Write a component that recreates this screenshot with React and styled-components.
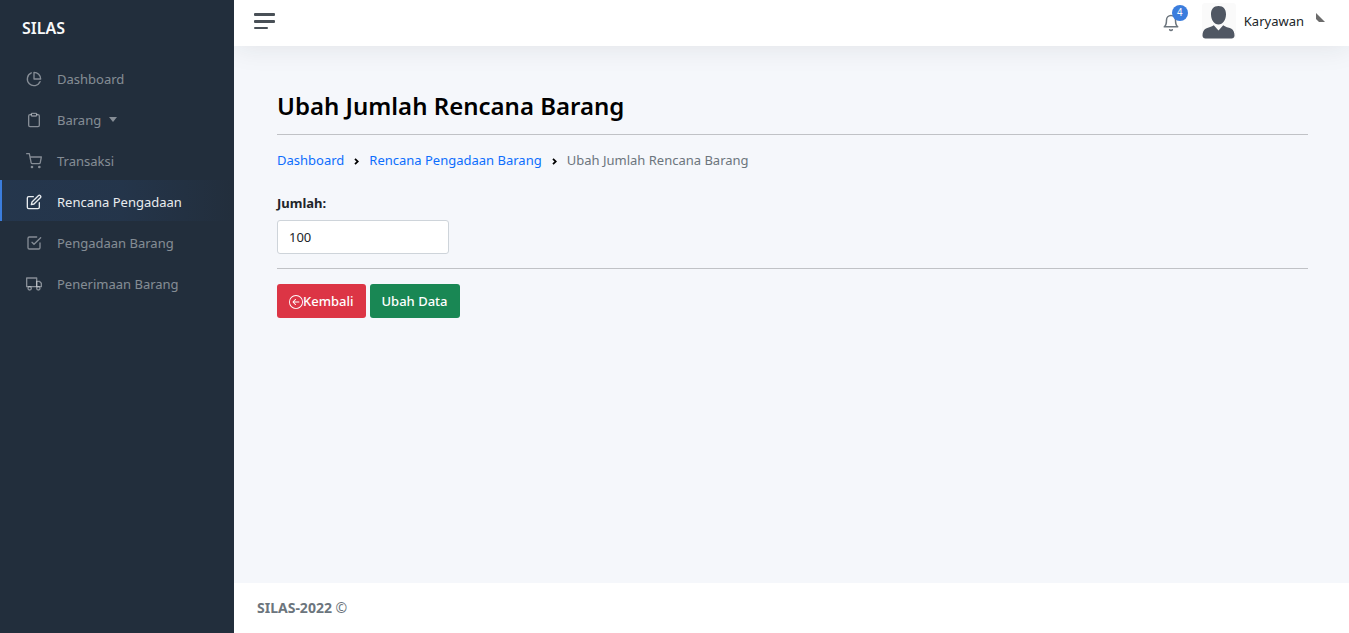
import React from 'react';
import styled, { createGlobalStyle } from 'styled-components';
import {
  FiPieChart, FiClipboard, FiShoppingCart, FiEdit, FiCheckSquare, FiTruck, FiBell,
} from 'react-icons/fi';
import { BsArrowLeftCircle } from 'react-icons/bs';

const GlobalStyle = createGlobalStyle`
  *, *::before, *::after { box-sizing: border-box; }
  body {
    margin: 0;
    background: #f5f7fb;
    color: #212529;
    font-family: 'Noto Sans', 'Open Sans', sans-serif;
    font-size: 13px;
    line-height: 20px;
  }
  a { text-decoration: none; }
`;

const Layout = styled.div`
  display: flex;
  min-height: 100vh;
`;

const Sidebar = styled.nav`
  position: relative;
  z-index: 1;
  flex: 0 0 234px;
  background: #222e3c;
`;

const Brand = styled.a`
  display: block;
  padding: 16px 22px 17px;
  color: #f8f9fa;
  font-size: 16px;
  font-weight: 600;
  line-height: 24px;
`;

const NavList = styled.ul`
  margin: 0;
  padding: 0;
  list-style: none;
`;

const NavLink = styled.a`
  display: flex;
  align-items: center;
  gap: 15px;
  height: 41px;
  padding: 2px 0 0 24px;
  border-left: 2px solid ${(p) => (p.$active ? '#3b7ddd' : 'transparent')};
  background: ${(p) => (p.$active
    ? 'linear-gradient(90deg, rgba(59, 125, 221, 0.1), rgba(59, 125, 221, 0.09) 50%, transparent)'
    : 'transparent')};
  color: ${(p) => (p.$active ? '#e9ecef' : 'rgba(233, 236, 239, 0.5)')};

  svg {
    width: 16px;
    height: 16px;
    stroke-width: 2;
  }
`;

const NavLabel = styled.span`
  display: flex;
  align-items: center;
  gap: 8px;
`;

const Caret = styled.span`
  border: 4px solid transparent;
  border-top: 5px solid currentColor;
  border-bottom: 0;
`;

const Main = styled.div`
  display: flex;
  flex: 1;
  flex-direction: column;
  min-width: 0;
`;

const Topbar = styled.header`
  display: flex;
  align-items: center;
  justify-content: space-between;
  height: 46px;
  padding: 0 24px 0 20px;
  background: #fff;
  box-shadow: 0 0 29px rgba(33, 37, 41, 0.1);
`;

const MenuButton = styled.button`
  display: grid;
  gap: 4px;
  margin: 0 0 4px;
  padding: 0;
  border: 0;
  background: none;
  cursor: pointer;
`;

const MenuBar = styled.span`
  width: ${(p) => (p.$short ? '14px' : '21px')};
  height: ${(p) => (p.$short ? '2px' : '3px')};
  border-radius: 1px;
  background: #495057;
`;

const UserArea = styled.div`
  display: flex;
  align-items: center;
`;

const BellButton = styled.button`
  position: relative;
  display: flex;
  margin: 0 22px 0 0;
  padding: 0;
  border: 0;
  background: none;
  color: #6c757d;
  cursor: pointer;

  svg {
    width: 18px;
    height: 18px;
    stroke-width: 2;
  }
`;

const Badge = styled.span`
  position: absolute;
  top: -9px;
  right: -8px;
  width: 16px;
  height: 16px;
  border-radius: 50%;
  background: #3b7ddd;
  color: #fff;
  font-size: 10px;
  line-height: 16px;
  text-align: center;
`;

const UserLink = styled.a`
  display: flex;
  align-items: center;
  gap: 8px;
  margin-bottom: 4px;
  color: #212529;
`;

const Avatar = styled.svg`
  width: 34px;
  height: 36px;
  border-radius: 3px;
  background: #fafafa;
`;

const Corner = styled.svg`
  width: 9px;
  height: 9px;
  margin: 0 0 8px 4px;
`;

const Content = styled.main`
  flex: 1;
  padding: 44px 41px 44px 43px;
`;

const Title = styled.h1`
  margin: 0;
  color: #000;
  font-size: 24px;
  font-weight: 600;
  line-height: 32px;
`;

const Rule = styled.hr`
  height: 1px;
  margin: ${(p) => p.$gap || '14px'} 0 15px;
  border: 0;
  background: #c0c2c6;
`;

const Crumbs = styled.ol`
  display: flex;
  align-items: center;
  margin: 0 0 23px;
  padding: 0;
  list-style: none;
  color: #6c757d;

  li {
    display: flex;
    align-items: center;
  }
  a { color: #0d6efd; }
  svg { margin: 2px 10px 0; }
`;

const Label = styled.label`
  display: block;
  margin-bottom: 7px;
  font-weight: 700;
`;

const Input = styled.input`
  display: block;
  width: 172px;
  height: 34px;
  padding: 0 11px;
  border: 1px solid #ced4da;
  border-radius: 3px;
  background: #fff;
  color: #212529;
  font: inherit;
`;

const Actions = styled.div`
  display: flex;
  gap: 4px;
`;

const Button = styled.button`
  display: flex;
  align-items: center;
  height: 34px;
  padding: 0 12px;
  border: 0;
  border-radius: 3px;
  background: ${(p) => (p.$danger ? '#dc3545' : '#198754')};
  color: #fff;
  font: inherit;
  font-weight: 500;
  cursor: pointer;

  svg {
    width: 14px;
    height: 14px;
    margin-top: 2px;
  }
`;

const Footer = styled.footer`
  padding: 15px 23px;
  background: #fff;
  color: #6c757d;
  font-size: 14px;
`;

const items = [
  { label: 'Dashboard', Icon: FiPieChart },
  { label: 'Barang', Icon: FiClipboard, menu: true },
  { label: 'Transaksi', Icon: FiShoppingCart },
  { label: 'Rencana Pengadaan', Icon: FiEdit, active: true },
  { label: 'Pengadaan Barang', Icon: FiCheckSquare },
  { label: 'Penerimaan Barang', Icon: FiTruck },
];

function Chevron() {
  return (
    <svg width="5" height="7" viewBox="0 0 5 7" fill="none" stroke="#000" strokeWidth="1.8" aria-hidden="true">
      <path d="M1 .8 3.8 3.500 1 6.2" />
    </svg>
  );
}

export default function App() {
  return (
    <>
      <GlobalStyle />
      <Layout>
        <Sidebar>
          <Brand href="#">SILAS</Brand>
          <NavList>
            {items.map(({ label, Icon, active, menu }) => (
              <li key={label}>
                <NavLink href="#" $active={active} aria-current={active ? 'page' : undefined}>
                  <Icon />
                  <NavLabel>
                    {label}
                    {menu && <Caret />}
                  </NavLabel>
                </NavLink>
              </li>
            ))}
          </NavList>
        </Sidebar>
        <Main>
          <Topbar>
            <MenuButton type="button" aria-label="Menu">
              <MenuBar />
              <MenuBar />
              <MenuBar $short />
            </MenuButton>
            <UserArea>
              <BellButton type="button">
                <FiBell />
                <Badge>4</Badge>
              </BellButton>
              <UserLink href="#">
                <Avatar viewBox="0 0 34 36" aria-hidden="true">
                  <path
                    fill="#505763"
                    d="M16.500 3c5 0 7.500 3.200 7.500 8.200 0 5.600-3.200 10.300-7.500 10.300S9 16.800 9 11.200C9 6.200 11.500 3 16.500 3zM11.800 22.300l4.700 5.200 4.700-5.200c2 1.700 5.300 2.200 7.800 3.300 2.700 1.200 3.500 4.300 3.500 7 0 2-1.300 3-3 3h-26c-1.700 0-3-1-3-3 0-2.700.8-5.800 3.500-7 2.500-1.100 5.800-1.600 7.800-3.300z"
                  />
                </Avatar>
                Karyawan
                <Corner viewBox="0 0 9 9" aria-hidden="true">
                  <path d="M0 0v6l3 3h6z" fill="#6b6b6b" />
                </Corner>
              </UserLink>
            </UserArea>
          </Topbar>
          <Content>
            <Title>Ubah Jumlah Rencana Barang</Title>
            <Rule $gap="12px" />
            <nav aria-label="Breadcrumb">
              <Crumbs>
                <li><a href="#">Dashboard</a><Chevron /></li>
                <li><a href="#">Rencana Pengadaan Barang</a><Chevron /></li>
                <li aria-current="page">Ubah Jumlah Rencana Barang</li>
              </Crumbs>
            </nav>
            <form onSubmit={(e) => e.preventDefault()}>
              <Label htmlFor="jumlah">Jumlah:</Label>
              <Input id="jumlah" type="text" inputMode="numeric" defaultValue="100" />
              <Rule />
              <Actions>
                <Button type="button" $danger>
                  <BsArrowLeftCircle />
                  Kembali
                </Button>
                <Button type="submit">Ubah Data</Button>
              </Actions>
            </form>
          </Content>
          <Footer>
            <strong>SILAS-2022</strong> ©
          </Footer>
        </Main>
      </Layout>
    </>
  );
}
